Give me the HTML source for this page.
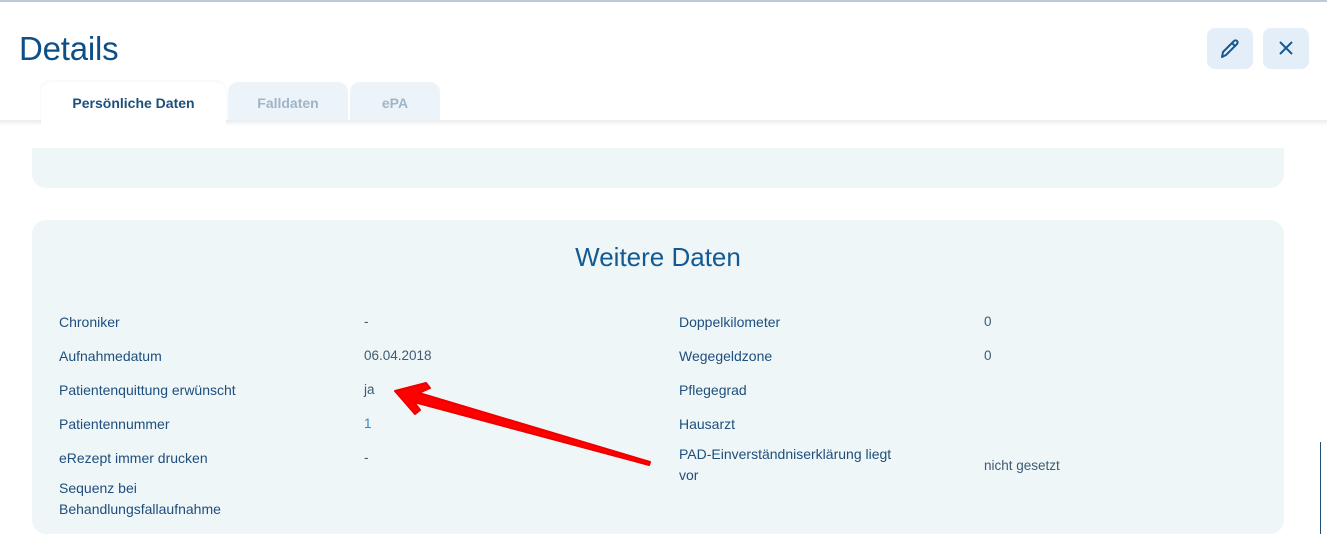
<!DOCTYPE html>
<html><head><meta charset="utf-8"><style>
*{margin:0;padding:0;box-sizing:border-box}
body{width:1327px;height:543px;overflow:hidden;background:#fff;font-family:"Liberation Sans",sans-serif;position:relative}
.abs{position:absolute;white-space:nowrap}
.topline{position:absolute;left:0;top:0;width:1327px;height:2px;background:#bccbd9}
h1{position:absolute;left:19px;top:30px;font-size:33px;font-weight:normal;color:#0d4f86;letter-spacing:-0.2px}
.btn{position:absolute;top:28px;width:46px;height:41px;border-radius:8px;background:#e3eef8}
.tab{position:absolute;top:82px;height:40px;border-radius:10px 10px 0 0;font-size:14px;font-weight:bold;text-align:center;line-height:42px}
.shade{position:absolute;left:0;top:120px;width:1327px;height:6px;background:linear-gradient(#e9ecee,#fff)}
.card{position:absolute;background:#eff6f8;border-radius:14px}
.l{color:#1d4e7c;font-size:14px}
.v{color:#3f5b72;font-size:13.5px}
</style></head><body>
<div class="topline"></div>
<h1>Details</h1>
<div class="btn" style="left:1207px"><svg width="46" height="41" viewBox="0 0 46 41"><path d="M15 29 L16 24 L27 13 A2 2 0 0 1 30 16 L19 27 Z M25 15 L28 18" fill="none" stroke="#155a94" stroke-width="2" stroke-linejoin="round"/></svg></div>
<div class="btn" style="left:1263px"><svg width="46" height="41" viewBox="0 0 46 41"><path d="M17 14 L29 26 M29 14 L17 26" stroke="#155a94" stroke-width="2"/></svg></div>
<div class="tab" style="left:228px;width:120px;background:#edf4f9;color:#9fb5c8">Falldaten</div>
<div class="tab" style="left:350px;width:90px;background:#edf4f9;color:#9fb5c8">ePA</div>
<div class="shade"></div>
<div class="tab" style="left:41px;width:185px;height:44px;background:#fff;color:#1d4e7c;box-shadow:0 -1px 3px rgba(0,0,0,0.05)">Persönliche Daten</div>
<div class="card" style="left:32px;top:148px;width:1252px;height:40px;border-radius:0 0 14px 14px"></div>
<div class="card" style="left:32px;top:220px;width:1252px;height:314px"></div>
<div class="abs" style="left:0;width:1316px;text-align:center;top:242px;font-size:26px;color:#145a92">Weitere Daten</div>
<div class="abs l" style="left:59px;top:314px">Chroniker</div>
<div class="abs l" style="left:59px;top:348px">Aufnahmedatum</div>
<div class="abs l" style="left:59px;top:382px">Patientenquittung erwünscht</div>
<div class="abs l" style="left:59px;top:416px">Patientennummer</div>
<div class="abs l" style="left:59px;top:450px">eRezept immer drucken</div>
<div class="abs l" style="left:59px;top:478px;line-height:21px">Sequenz bei<br>Behandlungsfallaufnahme</div>
<div class="abs v" style="left:364px;top:314px">-</div>
<div class="abs v" style="left:364px;top:348px">06.04.2018</div>
<div class="abs v" style="left:364px;top:382px">ja</div>
<div class="abs v" style="left:364px;top:416px;color:#2a8ad0">1</div>
<div class="abs v" style="left:364px;top:450px">-</div>
<div class="abs l" style="left:679px;top:314px">Doppelkilometer</div>
<div class="abs l" style="left:679px;top:348px">Wegegeldzone</div>
<div class="abs l" style="left:679px;top:382px">Pflegegrad</div>
<div class="abs l" style="left:679px;top:416px">Hausarzt</div>
<div class="abs l" style="left:679px;top:444px;line-height:21px">PAD-Einverständniserklärung liegt<br>vor</div>
<div class="abs v" style="left:984px;top:314px">0</div>
<div class="abs v" style="left:984px;top:348px">0</div>
<div class="abs v" style="left:984px;top:458px">nicht gesetzt</div>
<div style="position:absolute;left:1320px;top:442px;width:1px;height:92px;background:#1d4e7c"></div>
<svg style="position:absolute;left:0;top:0" width="1327" height="543"><polygon points="395,391 426,383 430,388 419,393 650,462 649,465 414,402 420,410 415,414" fill="#f00" stroke="#e00" stroke-width="2" stroke-linejoin="round"/></svg>
</body></html>
